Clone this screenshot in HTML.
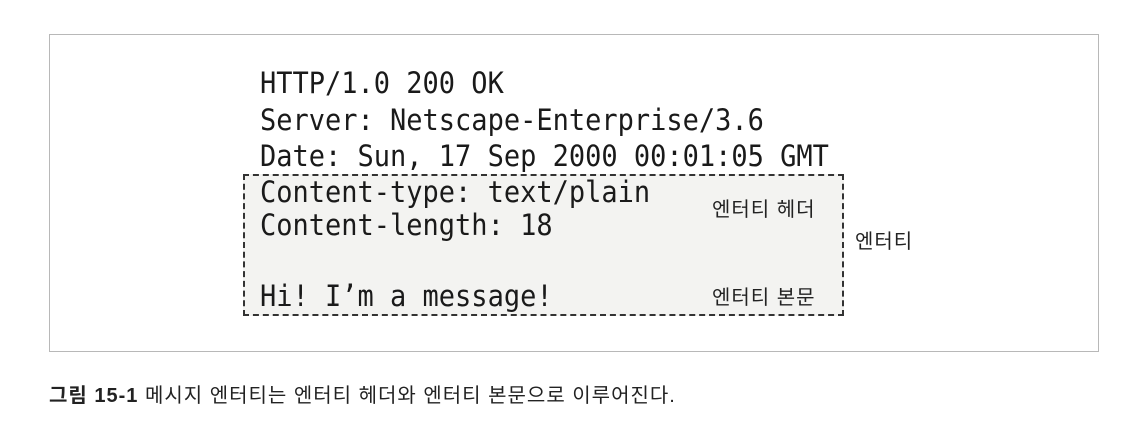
<!DOCTYPE html>
<html><head><meta charset="utf-8"><style>
body{margin:0;width:1138px;height:428px;background:#fff;position:relative;overflow:hidden}
.frame{position:absolute;left:49px;top:34px;width:1050px;height:318px;border:1px solid #b8b8b8;box-sizing:border-box}
.dash{position:absolute;left:243px;top:174px;width:601px;height:142px;border:2px dashed #333;box-sizing:border-box;background:#f3f3f1}
.m{position:absolute;left:260px;font-family:"DejaVu Sans Mono","Liberation Mono",monospace;font-size:29px;color:#1a1a1a;line-height:1;white-space:pre;transform:scaleX(0.931);transform-origin:0 0}
.k{position:absolute;font-family:"Liberation Sans","Noto Sans CJK KR",sans-serif;font-size:20px;letter-spacing:1px;color:#222;white-space:nowrap;line-height:1}
.cap{position:absolute;left:49px;top:379px;font-family:"Liberation Sans","Noto Sans CJK KR",sans-serif;font-size:20px;color:#222;white-space:nowrap;letter-spacing:1px}
</style></head><body>
<div class="frame"></div>
<div class="dash"></div>
<div class="m" style="top:69px">HTTP/1.0 200 OK</div>
<div class="m" style="top:106px">Server: Netscape-Enterprise/3.6</div>
<div class="m" style="top:142px">Date: Sun, 17 Sep 2000 00:01:05 GMT</div>
<div class="m" style="top:178px">Content-type: text/plain</div>
<div class="m" style="top:211px">Content-length: 18</div>
<div class="m" style="top:282px">Hi! I’m a message!</div>
<div class="k" style="left:712px;top:200px">엔터티 헤더</div>
<div class="k" style="left:855px;top:232px">엔터티</div>
<div class="k" style="left:712px;top:288px">엔터티 본문</div>
<div class="cap"><b>그림 15-1</b> 메시지 엔터티는 엔터티 헤더와 엔터티 본문으로 이루어진다.</div>
</body></html>
